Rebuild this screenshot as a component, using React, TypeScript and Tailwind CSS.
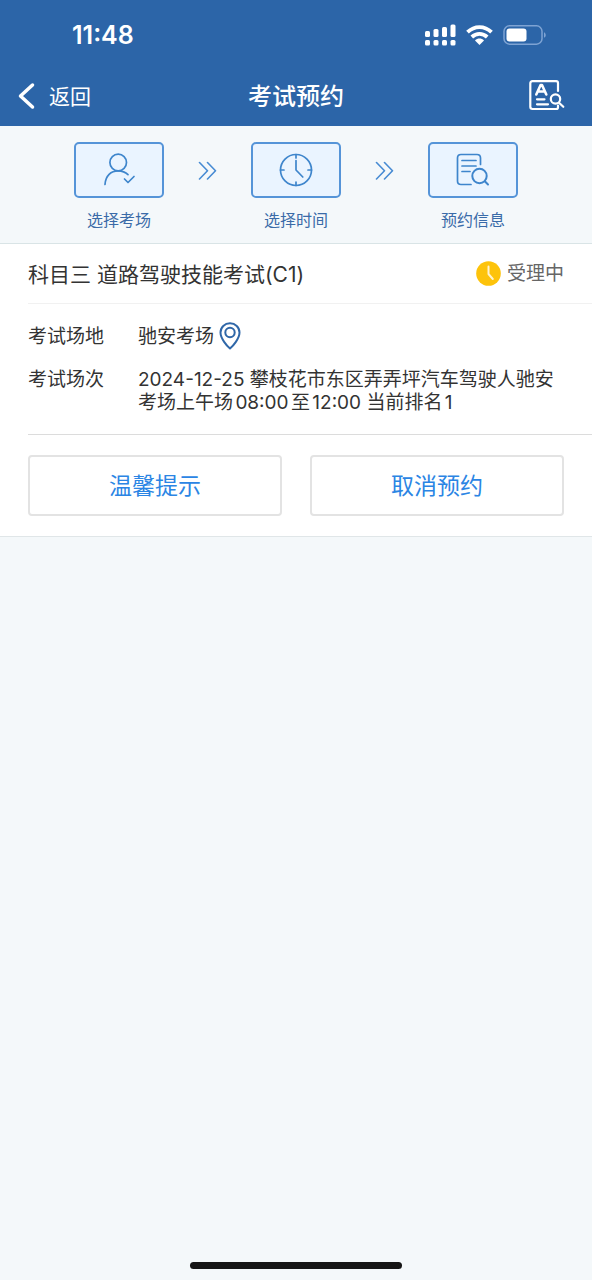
import type { ReactNode } from 'react';

function StatusBar() {
  return (
    <div className="flex h-[66px] items-center justify-between pr-[45px] pl-[72px] pt-1">
      <span className="pt-0.5 text-[25px] font-semibold">11:48</span>
      <div className="flex items-center gap-[10px]">
        <svg className="h-[22px] w-[31px]" viewBox="0 0 31 22" fill="currentColor" aria-hidden="true">
          <rect x="0" y="7" width="5" height="6" rx="1.5" />
          <rect x="8.500" y="5" width="5" height="8" rx="1.500" />
          <rect x="17" y="3" width="5" height="10" rx="1.500" />
          <rect x="25.500" y="0.500" width="5" height="12.500" rx="1.500" />
          <rect x="0" y="16" width="5" height="5.500" rx="1.500" />
          <rect x="8.500" y="16" width="5" height="5.500" rx="1.500" />
          <rect x="17" y="16" width="5" height="5.500" rx="1.500" />
          <rect x="25.500" y="16" width="5" height="5.500" rx="1.500" />
        </svg>
        <svg className="h-5 w-[27px]" viewBox="0 0 27 20" fill="none" stroke="currentColor" strokeWidth="3.800" aria-hidden="true">
          <path d="M1.500 7.200C8.500 0.400 18.500 0.400 25.500 7.200" />
          <path d="M5.800 12C10.300 7.800 16.700 7.800 21.200 12" />
          <path d="M13.500 20L9 15.400C11.700 13 15.300 13 18 15.400Z" fill="currentColor" stroke="none" />
        </svg>
        <svg className="h-5 w-11" viewBox="0 0 44 20" aria-hidden="true">
          <rect x="1" y="0.800" width="38" height="18.400" rx="5.500" fill="none" stroke="#7ea3d3" strokeWidth="1.500" />
          <rect x="3.500" y="3.500" width="20" height="13" rx="3" fill="currentColor" />
          <path d="M41 7.200C43.300 8.200 43.300 11.800 41 12.800Z" fill="#7ea3d3" />
        </svg>
      </div>
    </div>
  );
}

function Header() {
  return (
    <header className="bg-[#2c65a8] text-white">
      <StatusBar />
      <div className="grid h-[60px] grid-cols-[1fr_auto_1fr] items-center px-[18px]">
        <button type="button" className="flex items-center gap-[14px] justify-self-start text-[21px]">
          <svg className="h-7 w-[17px]" viewBox="0 0 17 28" fill="none" stroke="currentColor" strokeWidth="3.500" strokeLinecap="round" strokeLinejoin="round" aria-hidden="true">
            <path d="M14.500 3L2.500 14L14.500 25" />
          </svg>
          <span className="pt-0.5">返回</span>
        </button>
        <h1 className="pt-0.5 text-2xl font-medium">考试预约</h1>
        <button type="button" aria-label="查询" className="mr-[9px] justify-self-end">
          <svg className="block h-8 w-9" viewBox="0 0 36 32" fill="none" stroke="currentColor" strokeWidth="2.200" strokeLinecap="round" strokeLinejoin="round" aria-hidden="true">
            <path d="M29 11V3Q29 1.200 27.200 1.200H3.500Q1.300 1.200 1.300 3.400V26.800Q1.300 29 3.500 29H27.200Q29 29 29 27.200V25.500" />
            <path d="M7.300 14.500L11.600 5H13L17.300 14.500M9 11.500H15.500" strokeWidth="2.600" />
            <path d="M8 19.300H15.500M8 24.300H19" />
            <circle cx="26.500" cy="19" r="4.700" />
            <path d="M30 22.700L34.300 26.800" />
          </svg>
        </button>
      </div>
    </header>
  );
}

function Step({ label, children }: { label: string; children: ReactNode }) {
  return (
    <li className="flex w-[90px] flex-col items-center gap-2">
      <div className="flex h-14 w-full items-center justify-center rounded-[5px] border-2 border-[#5594d8] bg-[#eaf4ff]">
        <svg className="size-9" viewBox="0 0 36 36" fill="none" stroke="#3e85cc" strokeWidth="1.700" strokeLinecap="round" strokeLinejoin="round" aria-hidden="true">
          {children}
        </svg>
      </div>
      <span className="pt-0.5 text-base leading-6 whitespace-nowrap text-[#3a6ba8]">{label}</span>
    </li>
  );
}

function StepArrow() {
  return (
    <li className="flex h-14 items-center" aria-hidden="true">
      <svg className="h-5 w-[23px]" viewBox="0 0 23 20" fill="none" stroke="#478bd3" strokeWidth="1.600" strokeLinecap="round" strokeLinejoin="round">
        <path d="M3.500 2.500L11.500 10.700L3.500 19M11.500 2.500L19.500 10.700L11.500 19" />
      </svg>
    </li>
  );
}

function Steps() {
  return (
    <ol className="flex justify-center gap-8 border-b border-[#d9e4e6] pt-4 pb-[11px]">
      <Step label="选择考场">
        <circle cx="17.200" cy="10.500" r="8.300" />
        <path d="M4 32.500C4.500 23.500 10 18.800 17.200 18.800C21 18.800 24.500 20.200 27 22.700" />
        <path d="M23.500 27L27 30.500L33 24.500" />
      </Step>
      <StepArrow />
      <Step label="选择时间">
        <circle cx="18" cy="18" r="15.500" />
        <path d="M18 2.500V6M18 30V33.500M2.500 18H6M30 18H33.500M18 8.500V18L24.800 25" />
      </Step>
      <StepArrow />
      <Step label="预约信息">
        <path d="M25.500 12.500V6Q25.500 2.500 22 2.500H6Q2.500 2.500 2.500 6V29Q2.500 32.500 6 32.500H16" />
        <path d="M7 8.500H21M7 14H21M7 19.500H15" />
        <circle cx="24.500" cy="24" r="7.200" strokeWidth="2" />
        <path d="M29.800 29.300L33 32.500" strokeWidth="2" />
      </Step>
    </ol>
  );
}

function Appointment() {
  return (
    <section className="border-b border-[#e0e6e8] bg-white pl-7 text-[19px] text-[#333]">
      <div className="flex h-[60px] items-center justify-between border-b border-[#f1f1f1] pr-7">
        <h2 className="pt-0.5 text-[21px]">科目三 道路驾驶技能考试(C1)</h2>
        <div className="flex items-center gap-[6px] text-[#666]">
          <svg className="size-[25px]" viewBox="0 0 25 25" aria-hidden="true">
            <circle cx="12.500" cy="12.500" r="12.300" fill="#fdc30b" />
            <path d="M12.500 5.500V13L16.800 18" fill="none" stroke="#fff3d0" strokeWidth="2" strokeLinecap="round" strokeLinejoin="round" />
          </svg>
          <span className="pt-0.5">受理中</span>
        </div>
      </div>
      <dl className="grid grid-cols-[110px_1fr] gap-y-[18px] border-b border-[#dcdcdc] pt-[18px] pr-7 pb-5 leading-[23px]">
        <dt className="flex items-center">考试场地</dt>
        <dd className="flex items-center gap-[5px]">
          驰安考场
          <svg className="h-7 w-[22px]" viewBox="0 0 22 28" fill="none" stroke="#2f67a8" strokeWidth="2" strokeLinejoin="round" aria-hidden="true">
            <path d="M11 26.500C8 24 1.500 16.500 1.500 10.500C1.500 5.200 5.700 1.300 11 1.300S20.500 5.200 20.500 10.500C20.500 16.500 14 24 11 26.500Z" />
            <circle cx="11" cy="10.500" r="4.700" />
          </svg>
        </dd>
        <dt>考试场次</dt>
        <dd>2024-12-25 攀枝花市东区弄弄坪汽车驾驶人驰安考场上午场08:00至12:00 当前排名1</dd>
      </dl>
      <div className="grid grid-cols-2 gap-7 py-5 pr-7 text-[23px] text-[#2b85e4]">
        <button type="button" className="h-[61px] rounded-[4px] border-2 border-[#e3e3e3] pt-0.5">温馨提示</button>
        <button type="button" className="h-[61px] rounded-[4px] border-2 border-[#e3e3e3] pt-0.5">取消预约</button>
      </div>
    </section>
  );
}

export default function App() {
  return (
    <div className="flex min-h-screen flex-col bg-[#f4f8fa] font-['Inter','Noto_Sans_CJK_SC',sans-serif] [text-autospace:normal]">
      <Header />
      <main>
        <Steps />
        <Appointment />
      </main>
      <div className="mx-auto mt-auto mb-[11px] h-[7px] w-[212px] rounded-full bg-[#151515]" />
    </div>
  );
}
